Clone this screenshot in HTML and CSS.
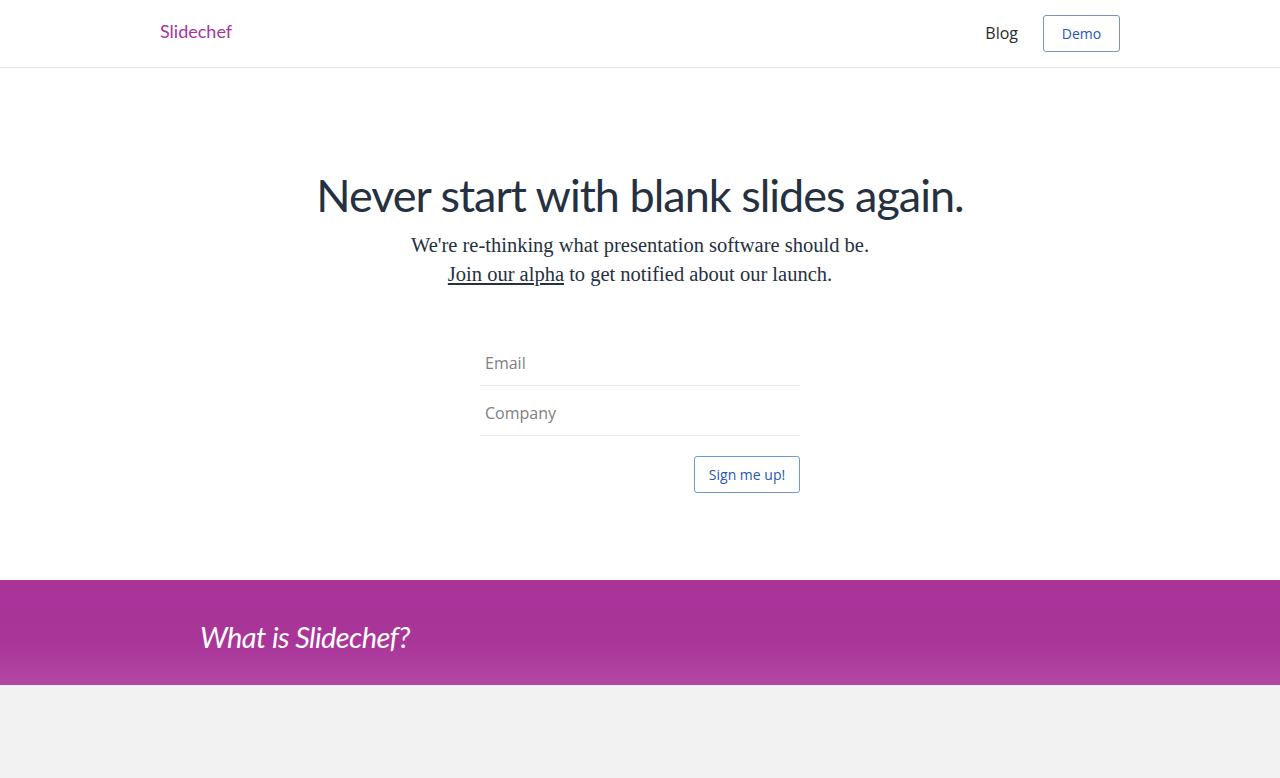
FILE: index.html
```html
<!DOCTYPE html>
<html lang="en">
<head>
<meta charset="utf-8">
<title>Slidechef</title>
<link rel="stylesheet" href="styles.css">
</head>
<body>
<header class="topbar">
  <div class="topbar-inner">
    <a class="logo" href="#">Slidechef</a>
    <nav class="nav">
      <a class="nav-link" href="#">Blog</a>
      <a class="btn btn-demo" href="#">Demo</a>
    </nav>
  </div>
</header>
<main>
  <section class="hero">
    <h1 class="hero-title">Never start with blank slides again.</h1>
    <p class="hero-sub">We're re-thinking what presentation software should be.<br><a href="#" class="hero-link">Join our alpha</a> to get notified about our launch.</p>
    <form class="signup">
      <input class="field" type="email" placeholder="Email">
      <input class="field" type="text" placeholder="Company">
      <div class="signup-actions">
        <button class="btn btn-sign" type="button">Sign me up!</button>
      </div>
    </form>
  </section>
  <section class="band">
    <div class="band-inner">
      <h2 class="band-title">What is Slidechef?</h2>
    </div>
  </section>
  <section class="rest"></section>
</main>
</body>
</html>
```
FILE: styles.css
```css
* { box-sizing: border-box; }
html, body { margin: 0; padding: 0; }
body {
  background: #f2f2f2;
  font-family: "Open Sans", "DejaVu Sans", sans-serif;
  color: #253041;
}
.topbar {
  background: #fff;
  border-bottom: 1px solid #e3e3e3;
  height: 68px;
}
.topbar-inner {
  width: 960px;
  margin: 0 auto;
  height: 67px;
  display: flex;
  align-items: center;
  justify-content: space-between;
}
.logo {
  color: #aa3399;
  text-decoration: none;
  font-family: "Lato", sans-serif;
  font-size: 18px;
  margin-top: -5px;
}
.nav { display: flex; align-items: center; gap: 25px; }
.nav-link {
  color: #2a2a2a;
  text-decoration: none;
  font-family: "Open Sans", sans-serif;
  font-size: 16px;
  margin-top: -2px;
}
.btn {
  display: inline-flex;
  align-items: center;
  justify-content: center;
  background: #fff;
  border: 1px solid #6c9bd4;
  border-radius: 3px;
  color: #2457b5;
  font-family: "Open Sans", sans-serif;
  font-size: 14px;
  text-decoration: none;
  cursor: pointer;
}
.btn-demo { width: 77px; height: 37px; border-color: #8094b8; margin-top: -1px; }
.hero {
  background: #fff;
  padding: 101px 0 87px;
  text-align: center;
}
.hero-title {
  margin: 0;
  font-family: "Lato", sans-serif;
  font-weight: 400;
  font-size: 45px;
  line-height: 52px;
  letter-spacing: -1px;
  color: #253041;
}
.hero-sub {
  margin: 10px 0 0;
  font-family: "Liberation Serif", serif;
  font-size: 20.5px;
  line-height: 29px;
  color: #253041;
}
.hero-link { color: #253041; text-decoration: underline; }
.signup {
  width: 320px;
  margin: 47px auto 0;
  text-align: left;
}
.field {
  display: block;
  width: 100%;
  height: 50px;
  border: 0;
  border-bottom: 1px solid #e6e6e6;
  padding: 4px 5px 0;
  font-family: "Open Sans", sans-serif;
  font-size: 16px;
  color: #333;
  outline: none;
  background: transparent;
}
.field::placeholder { color: #808080; }
.signup-actions { display: flex; justify-content: flex-end; margin-top: 20px; }
.btn-sign { width: 106px; height: 37px; padding: 0; }
.band {
  height: 105px;
  background: linear-gradient(#a93398 0%, #aa3599 60%, #b247a4 100%);
}
.band-inner {
  width: 880px;
  margin: 0 auto;
  height: 100%;
  display: flex;
  align-items: center;
  padding-top: 8px;
}
.band-title {
  margin: 0;
  color: #fff;
  font-family: "Lato", sans-serif;
  font-style: italic;
  font-weight: 400;
  font-size: 29px;
  letter-spacing: -0.6px;
}
.rest { height: 93px; background: #f2f2f2; }
```
